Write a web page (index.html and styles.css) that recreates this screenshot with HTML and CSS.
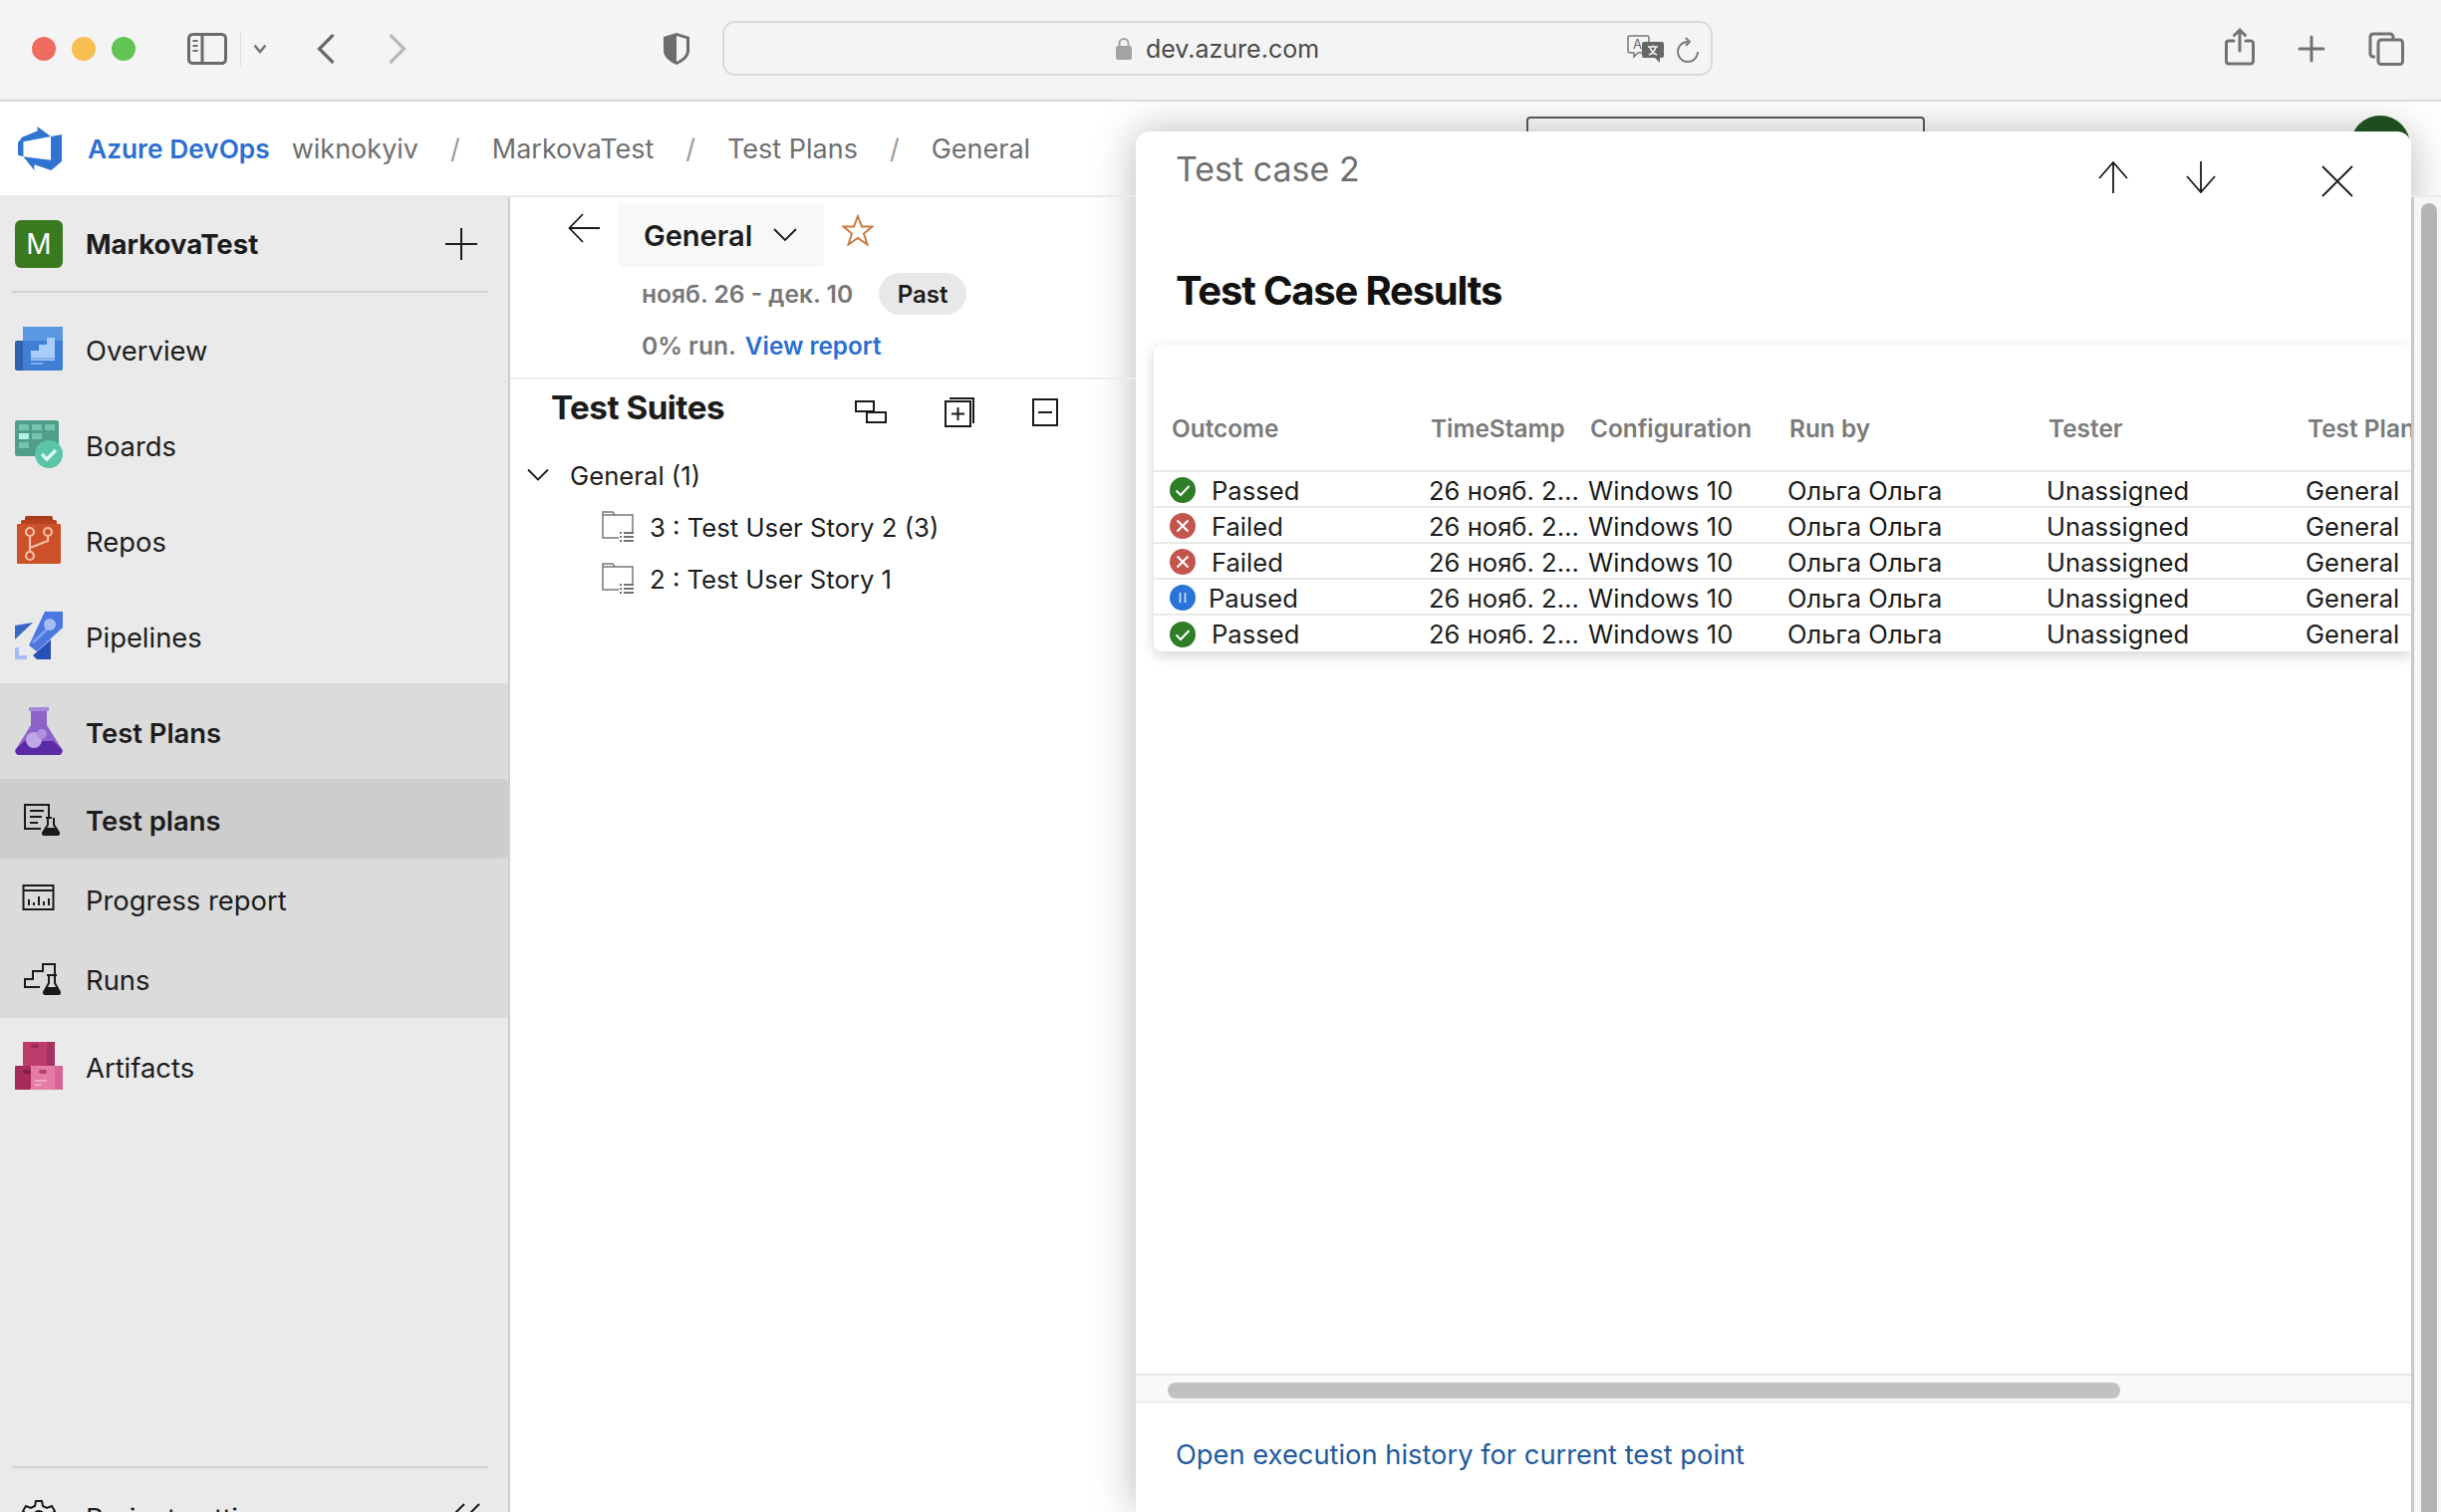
FILE: index.html
```html
<!DOCTYPE html>
<html lang="en">

<head>
  <meta charset="UTF-8">
  <title>Test case 2 - Azure DevOps</title>
  <link rel="stylesheet" href="styles.css">
</head>

<body>
  <!-- browser chrome -->
  <header class="browser">
    <div class="lights">
      <span class="light red"></span>
      <span class="light yellow"></span>
      <span class="light green"></span>
    </div>
    <svg class="b-sidebar" width="40" height="32" viewBox="0 0 40 32" fill="none" stroke="#6b6b6b" stroke-width="3">
      <rect x="1.5" y="1.5" width="37" height="29" rx="4" />
      <path d="M15 2v28" />
      <path d="M5.500 8h5M5.500 13h5M5.500 18h5" stroke-width="2" />
    </svg>
    <span class="b-divider"></span>
    <svg class="b-caret" width="14" height="10" viewBox="0 0 14 10" fill="none" stroke="#777" stroke-width="2.500">
      <path d="M1.500 1.500L7 8l5.500-6.500" />
    </svg>
    <svg class="b-back" width="18" height="30" viewBox="0 0 18 30" fill="none" stroke="#6a6a6a" stroke-width="3.200" stroke-linecap="round">
      <path d="M15.500 2L2.500 15l13 13" />
    </svg>
    <svg class="b-forward" width="18" height="30" viewBox="0 0 18 30" fill="none" stroke="#b9b9b9" stroke-width="3.200" stroke-linecap="round">
      <path d="M2.500 2l13 13-13 13" />
    </svg>
    <svg class="b-shield" width="28" height="34" viewBox="0 0 28 34">
      <path d="M14 1l13 4v14c0 6-6 11-13 14C7 30 1 25 1 19V5z" fill="#6c6c6c" />
      <path d="M14 4l10 3v12c0 4.500-4.500 8.500-10 11z" fill="#f4f4f4" />
    </svg>
    <div class="address">
      <svg class="lock" width="16" height="23" viewBox="0 0 16 23">
        <path d="M3.500 10V6.500a4.500 4.500 0 0 1 9 0V10" fill="none" stroke="#a3a3a3" stroke-width="2" />
        <rect y="9" width="16" height="14" rx="2" fill="#a3a3a3" />
      </svg>
      <span class="url">dev.azure.com</span>
      <svg class="translate" width="38" height="28" viewBox="0 0 38 28">
        <path d="M3 1h17a2 2 0 0 1 2 2v13a2 2 0 0 1-2 2H11l-4 4v-4H3a2 2 0 0 1-2-2V3a2 2 0 0 1 2-2z" fill="#f4f4f4" stroke="#777" stroke-width="1.500" />
        <text x="6" y="14" font-family="Inter" font-size="13" fill="#666">A</text>
        <path d="M17 7h18a2 2 0 0 1 2 2v12a2 2 0 0 1-2 2h-2v5l-5-5H17a2 2 0 0 1-2-2V9a2 2 0 0 1 2-2z" fill="#666" />
        <path d="M21 12h10M26 10.500V12M29 12c-1 4-4 7-7 8M23 12c1 4 4 7 7 8" fill="none" stroke="#f4f4f4" stroke-width="1.500" />
      </svg>
      <svg class="reload" width="24" height="26" viewBox="0 0 24 26" fill="none" stroke="#777" stroke-width="1.800">
        <path d="M12 5a10 10 0 1 0 10 10" />
        <path d="M10 1l4 4-4 4" />
      </svg>
    </div>
    <svg class="b-share" width="30" height="38" viewBox="0 0 30 38" fill="none" stroke="#727272" stroke-width="3" stroke-linecap="round">
      <path d="M9 13H4a2.500 2.500 0 0 0-2.500 2.500v18A2.500 2.500 0 0 0 4 36h22a2.500 2.500 0 0 0 2.500-2.500v-18A2.500 2.500 0 0 0 26 13h-5" />
      <path d="M15 23V2M9.500 7.500L15 2l5.500 5.500" />
    </svg>
    <svg class="b-plus" width="28" height="28" viewBox="0 0 28 28" stroke="#727272" stroke-width="3" stroke-linecap="round">
      <path d="M14 2v24M2 14h24" />
    </svg>
    <svg class="b-tabs" width="36" height="34" viewBox="0 0 36 34" fill="none" stroke="#727272" stroke-width="3">
      <path d="M7 25H5a3 3 0 0 1-3-3V5a3 3 0 0 1 3-3h17a3 3 0 0 1 3 3v2" />
      <rect x="10" y="8" width="24.500" height="24.500" rx="3" />
    </svg>
  </header>

  <!-- azure devops top bar -->
  <div class="topbar">
    <svg class="ado-logo" width="44" height="44" viewBox="0 0 24 24">
      <path d="M0 8.877L2.247 5.910l8.405-3.416V.022l7.370 5.393L2.966 8.338v8.225L0 15.707zm24-4.450v14.651l-5.753 4.900-9.303-3.057v3.056l-5.978-7.416 15.057 1.798V5.415z" fill="#2f74d0" />
    </svg>
    <span class="brand">Azure DevOps</span>
    <nav class="crumbs">
      <span>wiknokyiv</span>
      <span class="slash">/</span>
      <span>MarkovaTest</span>
      <span class="slash">/</span>
      <span>Test Plans</span>
      <span class="slash">/</span>
      <span>General</span>
    </nav>
    <div class="search"></div>
    <div class="avatar"></div>
  </div>

  <div class="workspace">
    <aside class="sidebar">
      <div class="project">
        <span class="project-badge">M</span>
        <span class="project-name">MarkovaTest</span>
        <svg class="project-add" width="34" height="34" viewBox="0 0 34 34" stroke="#1d1d1d" stroke-width="2">
          <path d="M17 1v32M1 17h32" />
        </svg>
      </div>

      <div class="nav">
        <a class="nav-item">
          <svg class="nav-icon" viewBox="0 0 48 48">
            <rect x="0" y="16" width="12" height="30" rx="2" fill="#2e62ad" />
            <rect x="8" y="2" width="40" height="44" rx="2" fill="#3f80d6" />
            <rect x="8" y="2" width="40" height="14" fill="#5b98e2" />
            <path d="M16 26h8v-6h8v-7h8v23H16z" fill="#a9cdf8" />
            <path d="M16 33h24v2H16zM16 38h12v2H16z" fill="#7fb0ee" />
          </svg>
          <span>Overview</span>
        </a>
        <a class="nav-item">
          <svg class="nav-icon" viewBox="0 0 48 48">
            <rect y="0" width="44" height="36" rx="2" fill="#4f9f8b" />
            <path d="M4 4h10v6H4zM17 4h10v6H17zM30 4h10v6H30zM17 13h10v6H17zM4 22h10v6H4z" fill="#74c4ae" />
            <path d="M4 13h10v6H4z" fill="#b3f3e2" />
            <circle cx="34" cy="34" r="14" fill="#5cc4a9" />
            <path d="M27 34l5 5 9-9" fill="none" stroke="#dcfbf3" stroke-width="3.500" />
          </svg>
          <span>Boards</span>
        </a>
        <a class="nav-item">
          <svg class="nav-icon" viewBox="0 0 48 48">
            <rect x="10" y="0" width="28" height="10" rx="2" fill="#a83c1c" />
            <rect x="6" y="4" width="36" height="10" rx="2" fill="#b6431f" />
            <rect x="2" y="8" width="44" height="40" rx="1" fill="#cc5128" />
            <g fill="none" stroke="#f6bfa6" stroke-width="2.200">
              <circle cx="15" cy="16" r="4" />
              <circle cx="33" cy="16" r="4" />
              <circle cx="15" cy="40" r="4" />
              <path d="M15 20v16M15 32l18-7v-5" />
            </g>
          </svg>
          <span>Repos</span>
        </a>
        <a class="nav-item">
          <svg class="nav-icon" viewBox="0 0 48 48">
            <path d="M0 14L18 11 0 28z" fill="#3766c4" />
            <path d="M36 48h-14l-4-4 18-16z" fill="#2a50b8" />
            <path d="M14 34L30 0h18v16L22 40z" fill="#4a78de" />
            <path d="M18 31l14-13" stroke="#7f9ff0" stroke-width="3" />
            <circle cx="35" cy="13" r="6" fill="#a5bcf5" />
            <path d="M0 36h4v8h8v4H0z" fill="#a5bcf5" />
            <path d="M8 40l6-6" stroke="#e2e9fb" stroke-width="3" />
          </svg>
          <span>Pipelines</span>
        </a>

        <div class="nav-group">
          <a class="nav-item active-hub">
            <svg class="nav-icon" viewBox="0 0 48 48">
              <rect x="14" y="0" width="20" height="4" fill="#a888dc" />
              <path d="M16 4h16v14l15 24a4 4 0 0 1-4 6H5a4 4 0 0 1-4-6l15-24z" fill="#8c63c9" />
              <path d="M9.500 34h29l8.500 8a4 4 0 0 1-4 6H5a4 4 0 0 1-4-6z" fill="#5d2aa6" />
              <circle cx="19" cy="33" r="8" fill="#c3a6ea" />
              <circle cx="27" cy="27" r="5" fill="#b090e0" />
            </svg>
            <span>Test Plans</span>
          </a>
          <a class="sub-item selected">
            <svg class="nav-icon" viewBox="0 0 48 48">
              <path d="M26 34H10V10h24v14M15 16h14M15 22h12M15 28h8" fill="none" stroke="#1a1a1a" stroke-width="2" />
              <path d="M31 23h6M33 23v7l-5 8a1.500 1.500 0 0 0 1 2h14a1.500 1.500 0 0 0 1-2l-5-8v-7" fill="none" stroke="#1a1a1a" stroke-width="2" />
              <path d="M30 33h12l3 7H28z" fill="#1a1a1a" />
            </svg>
            <span>Test plans</span>
          </a>
          <a class="sub-item">
            <svg class="nav-icon" viewBox="0 0 48 48" fill="none" stroke="#1a1a1a" stroke-width="2">
              <rect x="8.500" y="11" width="30" height="24" />
              <path d="M9 16h30" />
              <path d="M14 31v-6M19 31v-3M24 31v-9M29 31v-4M34 31v-7" />
            </svg>
            <span>Progress report</span>
          </a>
          <a class="sub-item">
            <svg class="nav-icon" viewBox="0 0 48 48">
              <path d="M25 33H10v-8h8v-8h10v-7h12v10" fill="none" stroke="#1a1a1a" stroke-width="2" />
              <path d="M32 21h10M34 21v8l-5 9a1.500 1.500 0 0 0 1 2h14a1.500 1.500 0 0 0 1-2l-5-9v-8" fill="none" stroke="#1a1a1a" stroke-width="2" />
              <path d="M31 33h12l2.500 7H29z" fill="#1a1a1a" />
            </svg>
            <span>Runs</span>
          </a>
        </div>

        <a class="nav-item">
          <svg class="nav-icon" viewBox="0 0 48 48">
            <rect x="8" y="0" width="32" height="24" rx="1" fill="#bd3c6c" />
            <rect x="32" y="0" width="8" height="24" fill="#a83260" />
            <rect x="16" y="2" width="8" height="4" rx="2" fill="#992a55" />
            <rect x="0" y="24" width="16" height="24" rx="1" fill="#a62b5b" />
            <rect x="16" y="24" width="32" height="24" rx="1" fill="#e57ba6" />
            <rect x="40" y="24" width="8" height="24" fill="#d76696" />
            <rect x="8" y="28" width="8" height="4" rx="2" fill="#80204a" />
            <rect x="24" y="28" width="8" height="4" rx="2" fill="#bd3c6c" />
            <path d="M20 38h12v2H20zM20 42h7v2h-7z" fill="#f0a8c5" />
          </svg>
          <span>Artifacts</span>
        </a>
      </div>

      <div class="side-foot">
        <a class="nav-item">
          <svg class="nav-icon" viewBox="0 0 48 48" fill="none" stroke="#1a1a1a" stroke-width="2">
            <circle cx="24" cy="24" r="5" />
            <path d="M21 9h6l1 5 4 2 5-2 3 5-4 4v3l4 4-3 5-5-2-4 2-1 5h-6l-1-5-4-2-5 2-3-5 4-4v-3l-4-4 3-5 5 2 4-2z" />
          </svg>
          <span>Project settings</span>
          <svg class="collapse" width="32" height="26" viewBox="0 0 32 26" fill="none" stroke="#1a1a1a" stroke-width="2">
            <path d="M16 1L1 16M31 1L16 16M1 16l15 15M16 16l15 15" />
          </svg>
        </a>
      </div>
    </aside>

    <main class="main">
      <div class="plan-head">
        <div class="plan-title">
          <svg width="32" height="30" viewBox="0 0 32 30" fill="none" stroke="#1a1a1a" stroke-width="1.800">
            <path d="M32 15H2M15 1L1.500 15 15 29" />
          </svg>
          <button class="plan-btn">
            <span>General</span>
            <svg width="24" height="14" viewBox="0 0 24 14" fill="none" stroke="#1a1a1a" stroke-width="1.800">
              <path d="M1 1l11 11L23 1" />
            </svg>
          </button>
          <svg class="plan-star" width="32" height="32" viewBox="0 0 32 32" fill="none" stroke="#c87a3e" stroke-width="2">
            <path d="M16 2l4 10.500h10.500l-8.500 7 3.500 11L16 24l-9.500 6.500 3.500-11-8.500-7H12z" />
          </svg>
        </div>
        <div class="plan-dates">
          <span class="muted">нояб. 26 - дек. 10</span>
          <span class="pill">Past</span>
        </div>
        <div class="plan-run">
          <span class="muted">0% run.</span>
          <a class="report-link">View report</a>
        </div>
      </div>

      <div class="suites-head">
        <h2 class="suites-title">Test Suites</h2>
        <div class="suites-tools">
          <svg width="32" height="24" viewBox="0 0 32 24" fill="none" stroke="#1a1a1a" stroke-width="2">
            <rect x="1" y="1" width="18" height="10" />
            <rect x="12" y="12" width="19" height="10" fill="#fff" />
          </svg>
          <svg width="30" height="30" viewBox="0 0 30 30" fill="none" stroke="#1a1a1a" stroke-width="2">
            <rect x="1" y="4" width="25" height="25" />
            <path d="M5 1h24v25M13.500 10v13M7 16.500h13" />
          </svg>
          <svg width="26" height="28" viewBox="0 0 26 28" fill="none" stroke="#1a1a1a" stroke-width="2">
            <rect x="1" y="1" width="24" height="26" />
            <path d="M6 14h14" />
          </svg>
        </div>
      </div>

      <ul class="tree">
        <li class="tree-row">
          <svg width="22" height="14" viewBox="0 0 22 14" fill="none" stroke="#1a1a1a" stroke-width="1.800">
            <path d="M1 1.500l10 10 10-10" />
          </svg>
          <span>General (1)</span>
        </li>
        <li class="tree-row child">
          <svg width="32" height="32" viewBox="0 0 32 32" fill="none" stroke="#777" stroke-width="1.500">
            <path d="M17 27H1V1h10l2 3h18v17M1 4h12" />
            <path d="M18 22h2M18 26h2M18 30h2M22 22h10M22 26h10M22 30h10" stroke="#444" />
          </svg>
          <span>3 : Test User Story 2 (3)</span>
        </li>
        <li class="tree-row child">
          <svg width="32" height="32" viewBox="0 0 32 32" fill="none" stroke="#777" stroke-width="1.500">
            <path d="M17 27H1V1h10l2 3h18v17M1 4h12" />
            <path d="M18 22h2M18 26h2M18 30h2M22 22h10M22 26h10M22 30h10" stroke="#444" />
          </svg>
          <span>2 : Test User Story 1</span>
        </li>
      </ul>

      <!-- slide-in panel -->
      <section class="panel">
        <div class="panel-head">
          <h3 class="panel-title">Test case 2</h3>
          <svg class="panel-up" width="30" height="32" viewBox="0 0 30 32" fill="none" stroke="#1a1a1a" stroke-width="1.800">
            <path d="M15 32V1M1 17L15 1l14 16" />
          </svg>
          <svg class="panel-down" width="30" height="32" viewBox="0 0 30 32" fill="none" stroke="#1a1a1a" stroke-width="1.800">
            <path d="M15 0v31M1 15l14 16 14-16" />
          </svg>
          <svg class="panel-close" width="32" height="32" viewBox="0 0 32 32" fill="none" stroke="#1a1a1a" stroke-width="1.800">
            <path d="M1 1l30 30M31 1L1 31" />
          </svg>
        </div>
        <h1 class="results-title">Test Case Results</h1>

        <div class="results-card">
          <table class="results">
            <colgroup>
              <col class="c-outcome">
              <col class="c-time">
              <col class="c-config">
              <col class="c-runby">
              <col class="c-tester">
              <col class="c-plan">
            </colgroup>
            <thead>
              <tr>
                <th>Outcome</th>
                <th>TimeStamp</th>
                <th>Configuration</th>
                <th>Run by</th>
                <th>Tester</th>
                <th>Test Plan</th>
              </tr>
            </thead>
            <tbody>
              <tr>
                <td><div class="outcome"><svg width="26" height="26" viewBox="0 0 26 26"><circle cx="13" cy="13" r="13" fill="#2f7d26" /><path d="M6.500 13.500l4.500 4.500 8.500-9" fill="none" stroke="#fff" stroke-width="2" /></svg><span>Passed</span></div></td>
                <td>26 нояб. 2…</td>
                <td>Windows 10</td>
                <td>Ольга Ольга</td>
                <td>Unassigned</td>
                <td>General</td>
              </tr>
              <tr>
                <td><div class="outcome"><svg width="26" height="26" viewBox="0 0 26 26"><circle cx="13" cy="13" r="13" fill="#c4554d" /><path d="M7.500 7.500l11 11M18.500 7.500l-11 11" fill="none" stroke="#fff" stroke-width="2.200" /></svg><span>Failed</span></div></td>
                <td>26 нояб. 2…</td>
                <td>Windows 10</td>
                <td>Ольга Ольга</td>
                <td>Unassigned</td>
                <td>General</td>
              </tr>
              <tr>
                <td><div class="outcome"><svg width="26" height="26" viewBox="0 0 26 26"><circle cx="13" cy="13" r="13" fill="#c4554d" /><path d="M7.500 7.500l11 11M18.500 7.500l-11 11" fill="none" stroke="#fff" stroke-width="2.200" /></svg><span>Failed</span></div></td>
                <td>26 нояб. 2…</td>
                <td>Windows 10</td>
                <td>Ольга Ольга</td>
                <td>Unassigned</td>
                <td>General</td>
              </tr>
              <tr>
                <td><div class="outcome paused"><svg width="26" height="26" viewBox="0 0 26 26"><circle cx="13" cy="13" r="13" fill="#2b73d6" /><path d="M10.500 8v10M15.500 8v10" fill="none" stroke="#d5e4fa" stroke-width="1.600" /></svg><span>Paused</span></div></td>
                <td>26 нояб. 2…</td>
                <td>Windows 10</td>
                <td>Ольга Ольга</td>
                <td>Unassigned</td>
                <td>General</td>
              </tr>
              <tr>
                <td><div class="outcome"><svg width="26" height="26" viewBox="0 0 26 26"><circle cx="13" cy="13" r="13" fill="#2f7d26" /><path d="M6.500 13.500l4.500 4.500 8.500-9" fill="none" stroke="#fff" stroke-width="2" /></svg><span>Passed</span></div></td>
                <td>26 нояб. 2…</td>
                <td>Windows 10</td>
                <td>Ольга Ольга</td>
                <td>Unassigned</td>
                <td>General</td>
              </tr>
            </tbody>
          </table>
        </div>

        <div class="panel-scroll"><div class="panel-thumb"></div></div>
        <a class="history-link">Open execution history for current test point</a>
      </section>
    </main>

    <div class="page-scroll"><div class="page-thumb"></div></div>
  </div>
</body>

</html>
```

FILE: styles.css
```css
* {
  padding: 0;
  margin: 0;
  box-sizing: border-box;
}

html,
body {
  height: 100%;
  overflow: hidden;
}

body {
  display: flex;
  flex-direction: column;
  font-family: Inter, "Noto Sans", sans-serif;
  font-size: 25.7px;
  color: #1c1c1c;
  background-color: #fff;
}

svg {
  display: block;
  flex-shrink: 0;
}

ul {
  list-style: none;
}

/* browser chrome */
.browser {
  display: flex;
  align-items: center;
  flex-shrink: 0;
  height: 102px;
  padding-bottom: 3px;
  background-color: #f4f4f4;
  border-bottom: 2px solid #d9d9d9;
}

.lights {
  display: flex;
  gap: 16px;
  margin-left: 32px;
}

.light {
  width: 24px;
  height: 24px;
  border-radius: 50%;
}

.red {
  background-color: #ef6b5f;
}

.yellow {
  background-color: #f6bf4f;
}

.green {
  background-color: #61c454;
}

.b-sidebar {
  margin-left: 52px;
}

.b-divider {
  width: 1px;
  height: 36px;
  margin-left: 13px;
  background-color: #dcdcdc;
}

.b-caret {
  margin-left: 12px;
}

.b-back {
  margin-left: 50px;
}

.b-forward {
  margin-left: 54px;
}

.b-shield {
  margin-left: 257px;
}

.address {
  display: flex;
  align-items: center;
  justify-content: center;
  position: relative;
  width: 994px;
  height: 55px;
  margin-left: 32px;
  gap: 14px;
  border: 2px solid #dadada;
  border-radius: 13px;
}

.url {
  font-size: 25px;
  color: #4a4a4a;
}

.translate {
  position: absolute;
  right: 46px;
  top: 12px;
}

.reload {
  position: absolute;
  right: 11px;
  top: 14px;
}

.b-share {
  margin-left: 514px;
  margin-top: -4px;
}

.b-plus {
  margin-left: 43px;
}

.b-tabs {
  margin-left: 43px;
}

/* top bar */
.topbar {
  display: flex;
  align-items: center;
  flex-shrink: 0;
  height: 96px;
  padding-left: 18px;
  border-bottom: 2px solid #eaeaea;
}

.brand {
  margin-left: 26px;
  font-size: 26.300px;
  font-weight: 600;
  color: #2b6fd0;
}

.crumbs {
  display: flex;
  gap: 32px;
  margin-left: 22px;
  font-size: 27px;
  color: #6f6f6f;
}

.slash {
  color: #9a9a9a;
}

.search {
  align-self: flex-start;
  width: 400px;
  height: 60px;
  margin-top: 15px;
  margin-left: auto;
  border: 2px solid #555;
  border-radius: 4px;
}

.avatar {
  align-self: flex-start;
  width: 60px;
  height: 60px;
  margin-top: 14px;
  margin-left: 427px;
  margin-right: 31px;
  border-radius: 50%;
  background-color: #1e4d1f;
}

/* sidebar */
.workspace {
  display: flex;
  flex: 1;
  min-height: 0;
}

.sidebar {
  display: flex;
  flex-direction: column;
  flex-shrink: 0;
  width: 512px;
  overflow: hidden;
  background-color: #eaeaea;
  border-right: 2px solid #cfcfcf;
}

.project {
  display: flex;
  align-items: center;
  flex-shrink: 0;
  height: 96px;
  margin: 0 20px 0 12px;
  padding-left: 3px;
  border-bottom: 2px solid #d3d3d3;
}

.project-badge {
  display: flex;
  align-items: center;
  justify-content: center;
  width: 48px;
  height: 48px;
  border-radius: 6px;
  font-size: 28px;
  color: #fff;
  background-color: #39791f;
}

.project-name {
  margin-left: 23px;
  font-size: 27.500px;
  font-weight: 700;
}

.project-add {
  margin-left: auto;
  margin-right: 10px;
}

.nav {
  margin-top: 8px;
}

.nav-item,
.sub-item {
  display: flex;
  align-items: center;
  gap: 23px;
  padding-left: 15px;
  font-size: 27.400px;
  color: #1c1c1c;
}

.nav-item span,
.sub-item span {
  padding-top: 3px;
}

.nav-item {
  height: 96px;
}

.sub-item {
  height: 80px;
}

.nav-icon {
  width: 48px;
  height: 48px;
}

.nav-group {
  background-color: #dbdbdb;
}

.active-hub {
  font-weight: 600;
}

.selected {
  font-weight: 600;
  background-color: #cdcdcd;
  border-radius: 0 6px 6px 0;
}

.side-foot {
  flex-shrink: 0;
  height: 46px;
  margin: auto 20px 0 0;
  margin-left: 12px;
  border-top: 2px solid #d3d3d3;
}

.side-foot .nav-item {
  padding-left: 3px;
}

.collapse {
  margin-left: auto;
  margin-right: 8px;
}

/* plan header and suites tree */
.main {
  position: relative;
  flex: 1;
  min-width: 0;
}

.plan-head {
  padding: 6px 0 16px;
  border-bottom: 2px solid #ececec;
}

.plan-title {
  display: flex;
  align-items: center;
  height: 64px;
  padding-left: 58px;
}

.plan-title > svg:first-child {
  margin-top: -14px;
}

.plan-btn {
  display: flex;
  align-items: center;
  justify-content: space-between;
  width: 207px;
  height: 64px;
  margin-left: 18px;
  padding: 0 27px 0 26px;
  font: 600 29px Inter, sans-serif;
  color: #1c1c1c;
  background-color: #f8f8f8;
  border: none;
  border-radius: 4px;
}

.plan-star {
  margin-left: 18px;
  margin-top: -11px;
}

.plan-dates {
  display: flex;
  align-items: center;
  gap: 26px;
  margin-top: 6px;
  padding-left: 132px;
}

.muted {
  font-size: 24.600px;
  font-weight: 600;
  color: #777;
}

.pill {
  display: flex;
  align-items: center;
  justify-content: center;
  width: 88px;
  height: 42px;
  font-size: 24px;
  font-weight: 600;
  border-radius: 21px;
  background-color: #e8e8e8;
}

.plan-run {
  display: flex;
  align-items: center;
  gap: 9px;
  height: 32px;
  margin-top: 15px;
  padding-left: 132px;
}

.report-link {
  font-size: 24.300px;
  font-weight: 600;
  color: #2b6fd0;
}

.suites-head {
  display: flex;
  align-items: center;
  height: 55px;
  padding-left: 41px;
}

.suites-title {
  width: 305px;
  font-size: 33.200px;
  font-weight: 700;
  letter-spacing: -0.5px;
}

.suites-tools {
  display: flex;
  align-items: center;
  gap: 58px;
  margin-top: 11px;
}

.tree {
  margin-top: 15px;
}

.tree-row {
  display: flex;
  align-items: center;
  gap: 21px;
  height: 52px;
  padding-left: 17px;
}

.tree-row.child {
  gap: 16px;
  padding-left: 92px;
}

/* results panel */
.panel {
  display: flex;
  flex-direction: column;
  position: absolute;
  top: -66px;
  left: 628px;
  right: 0;
  bottom: 0;
  overflow: hidden;
  background-color: #fff;
  border-radius: 14px 14px 0 0;
}

.main::after {
  content: "";
  position: absolute;
  top: -66px;
  left: 628px;
  right: 0;
  bottom: 0;
  z-index: -1;
  border-radius: 14px 14px 0 0;
  box-shadow: 0 0 44px rgba(0, 0, 0, 0.28);
}

.panel-head {
  display: flex;
  align-items: flex-start;
  flex-shrink: 0;
  height: 135px;
  padding: 16px 58px 0 40px;
}

.panel-title {
  font-size: 34px;
  font-weight: 400;
  line-height: 44px;
  color: #6f6f6f;
}

.panel-up {
  margin-left: auto;
  margin-top: 14px;
}

.panel-down {
  margin-left: 58px;
  margin-top: 14px;
}

.panel-close {
  margin-left: 106px;
  margin-top: 18px;
}

.results-title {
  flex-shrink: 0;
  padding-left: 40px;
  font-size: 40px;
  font-weight: 700;
  line-height: 50px;
  letter-spacing: -1.200px;
  color: #111;
}

.results-card {
  flex-shrink: 0;
  height: 308px;
  margin-top: 29px;
  margin-left: 18px;
  border-radius: 8px 0 0 8px;
  box-shadow: 0 4px 14px rgba(0, 0, 0, 0.18);
}

.results {
  width: 1262px;
  table-layout: fixed;
  border-collapse: collapse;
}

.c-outcome {
  width: 276px;
}

.c-time {
  width: 160px;
}

.c-config {
  width: 200px;
}

.c-runby {
  width: 260px;
}

.c-tester {
  width: 260px;
}

.results th {
  height: 127px;
  padding: 42px 0 0 2px;
  overflow: hidden;
  font-size: 24.400px;
  font-weight: 600;
  text-align: left;
  white-space: nowrap;
  color: #7b7b7b;
  border-bottom: 2px solid #e9e9e9;
}

.results th:first-child {
  padding-left: 18px;
}

.results td {
  height: 36px;
  padding: 2px 0 0;
  font-size: 25.600px;
  white-space: nowrap;
  border-bottom: 2px solid #e9e9e9;
}

.results tr:last-child td {
  border-bottom: none;
}

.results td:first-child {
  padding-left: 16px;
}

.outcome {
  display: flex;
  align-items: center;
  gap: 16px;
}

.outcome.paused {
  gap: 13px;
}

.panel-scroll {
  flex-shrink: 0;
  height: 30px;
  margin-top: auto;
  padding: 7px 0 0 32px;
  background-color: #f9f9f9;
  border-top: 2px solid #e8e8e8;
  border-bottom: 2px solid #eee;
}

.panel-thumb {
  width: 956px;
  height: 16px;
  border-radius: 8px;
  background-color: #c1c1c1;
}

.history-link {
  flex-shrink: 0;
  height: 109px;
  padding: 36px 0 0 40px;
  font-size: 27.300px;
  line-height: 32px;
  color: #1f5a9e;
}

.page-scroll {
  flex-shrink: 0;
  width: 30px;
  padding: 6px 0 0 7px;
  background-color: #f6f6f6;
  border-left: 3px solid #c9c9c9;
}

.page-thumb {
  width: 16px;
  height: 100%;
  border-radius: 8px 8px 0 0;
  background-color: #b4b4b4;
}
```
